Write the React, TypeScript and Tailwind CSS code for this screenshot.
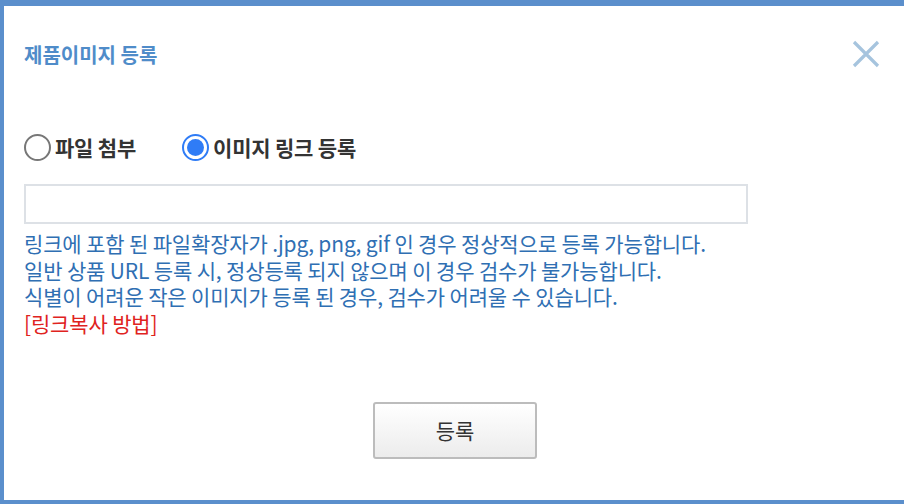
import React, { useState } from "react"

const font = { fontFamily: '"Noto Sans CJK KR", "Noto Sans", sans-serif' }

function Radio({ checked, label, onClick }: { checked: boolean, label: string, onClick: () => void }) {
  return (
    <button className="flex items-center gap-[4px]" onClick={onClick}>
      {checked ? (
        <span className="w-[27px] h-[27px] rounded-full border-2 border-[#2f7cf6] flex items-center justify-center">
          <span className="w-[17px] h-[17px] rounded-full bg-[#2f7cf6]" />
        </span>
      ) : (
        <span className="w-[27px] h-[27px] rounded-full border-2 border-[#777]" />
      )}
      <span className="text-[21px] font-bold tracking-[-0.2px] text-[#333] leading-none">{label}</span>
    </button>
  )
}

export default function App() {
  const [mode, setMode] = useState<'file' | 'link'>('link')
  const [url, setUrl] = useState('')

  return (
    <div style={font} className="w-[904px] h-[504px] bg-white border-t-[6px] border-l-4 border-b-4 border-[#5b8fcc] flex flex-col pl-[20px] pr-[24px]">
      {/* header */}
      <div className="flex justify-between items-start pt-[34px]">
        <div className="text-[20px] font-bold text-[#4f8cc9] leading-[26px] mt-[2px]">제품이미지 등록</div>
        <button className="w-[28px] h-[28px] text-[#a6c4de]">
          <svg viewBox="0 0 28 28" width="28" height="28">
            <path d="M2 2 L26 26 M26 2 L2 26" stroke="currentColor" strokeWidth="3.2" />
          </svg>
        </button>
      </div>

      {/* type select */}
      <div className="flex items-center gap-[46px] mt-[66px]">
        <Radio checked={mode === 'file'} label="파일 첨부" onClick={() => setMode('file')} />
        <Radio checked={mode === 'link'} label="이미지 링크 등록" onClick={() => setMode('link')} />
      </div>

      <input
        className="mt-[23px] w-[724px] h-[40px] border-2 border-[#dde1e6] outline-none px-2 text-[16px]"
        value={url}
        onChange={(e) => setUrl(e.target.value)}
      />

      <div className="mt-[6px] text-[21px] leading-[26.5px] text-[#2f6fb3] tracking-[-0.15px]">
        <p>링크에 포함 된 파일확장자가 .jpg, png, gif 인 경우 정상적으로 등록 가능합니다.</p>
        <p>일반 상품 URL 등록 시, 정상등록 되지 않으며 이 경우 검수가 불가능합니다.</p>
        <p>식별이 어려운 작은 이미지가 등록 된 경우, 검수가 어려울 수 있습니다.</p>
        <p className="text-[#e0231e] cursor-pointer">[링크복사 방법]</p>
      </div>

      <div className="flex justify-center mt-auto mb-[41px] pl-[6px]">
        <button className="w-[164px] h-[57px] rounded-[3px] border-2 border-[#bcbcbc] bg-gradient-to-b from-white to-[#ececec] text-[21px] text-[#333]">
          등록
        </button>
      </div>
    </div>
  )
}
